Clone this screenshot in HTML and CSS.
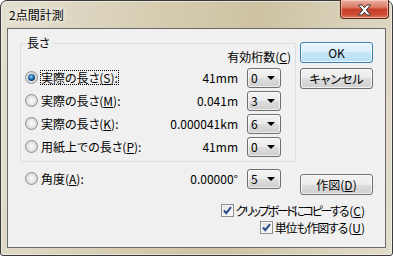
FILE: index.html
```html
<!DOCTYPE html>
<html lang="ja">
<head>
<meta charset="utf-8">
<title>2点間計測</title>
<link rel="stylesheet" href="styles.css">
</head>
<body>
<div class="window">
  <div class="titlebar">
    <span class="title">2点間計測</span>
    <div class="close">
      <svg width="15" height="12" viewBox="0 0 15 12"><polygon points="1.5,1 5,1 7.5,3.8 10,1 13.5,1 9.3,6 13.5,11 10,11 7.5,8.2 5,11 1.5,11 5.7,6" fill="#fff" stroke="#3a3a3a" stroke-width="1" stroke-linejoin="round"/></svg>
    </div>
  </div>
  <div class="client">
    <div class="layout">
      <fieldset class="group">
        <legend>長さ</legend>
        <div class="hdr">有効桁数(<u>C</u>)</div>
        <div class="row">
          <span class="opt"><span class="radio on"><span class="dot"></span></span><span class="lbl focus">実際の長さ(<u>S</u>):</span></span>
          <span class="val">41mm</span>
          <span class="combo"><span>0</span><i class="arrow"></i></span>
        </div>
        <div class="row">
          <span class="opt"><span class="radio"></span><span class="lbl">実際の長さ(<u>M</u>):</span></span>
          <span class="val">0.041m</span>
          <span class="combo"><span>3</span><i class="arrow"></i></span>
        </div>
        <div class="row">
          <span class="opt"><span class="radio"></span><span class="lbl">実際の長さ(<u>K</u>):</span></span>
          <span class="val">0.000041km</span>
          <span class="combo"><span>6</span><i class="arrow"></i></span>
        </div>
        <div class="row">
          <span class="opt"><span class="radio"></span><span class="lbl">用紙上での長さ(<u>P</u>):</span></span>
          <span class="val">41mm</span>
          <span class="combo"><span>0</span><i class="arrow"></i></span>
        </div>
      </fieldset>
      <div class="btns">
        <div class="btn default">OK</div>
        <div class="btn">キャンセル</div>
      </div>
      <div class="row angle">
        <span class="opt"><span class="radio"></span><span class="lbl">角度(<u>A</u>):</span></span>
        <span class="val">0.00000°</span>
        <span class="combo"><span>5</span><i class="arrow"></i></span>
      </div>
      <div class="btns draw">
        <div class="btn">作図(<u>D</u>)</div>
      </div>
      <div class="checks">
        <div class="chk"><span class="cb"><svg width="11" height="11" viewBox="0 0 11 11"><path d="M2 5.5 L4.3 8.2 L9 2.2" fill="none" stroke="#2b4c86" stroke-width="2"/></svg></span><span><span class="kana">クリップボードにコピーする</span>(<u>C</u>)</span></div>
        <div class="chk"><span class="cb"><svg width="11" height="11" viewBox="0 0 11 11"><path d="M2 5.5 L4.3 8.2 L9 2.2" fill="none" stroke="#2b4c86" stroke-width="2"/></svg></span><span><span class="kana2">単位も作図する</span>(<u>U</u>)</span></div>
      </div>
    </div>
  </div>
</div>
</body>
</html>
```

FILE: styles.css
```css
* { box-sizing: border-box; }
html, body { margin: 0; padding: 0; }
body {
  width: 393px;
  height: 256px;
  overflow: hidden;
  background: #fff;
  font-family: "Noto Sans CJK JP", "Noto Sans", sans-serif;
  font-feature-settings: "palt";
  font-size: 12px;
  color: #000;
}
.window {
  width: 393px;
  height: 256px;
  border: 1px solid #3b3b3b;
  border-radius: 7px 7px 3px 3px;
  background: linear-gradient(100deg, #e4dfd0 0%, #d6cdb2 35%, #cdc3a3 60%, #d8d0b8 80%, #e3ddcc 100%);
  box-shadow: inset 0 0 0 1px rgba(255,255,255,0.45);
  display: flex;
  flex-direction: column;
}
.titlebar {
  height: 27px;
  display: flex;
  justify-content: space-between;
  align-items: flex-start;
  padding: 0 3px 0 8px;
}
.title {
  margin-top: 7px;
  line-height: 14px;
  text-shadow: 0 0 6px #fff, 0 0 10px rgba(255,255,255,0.8);
}
.close {
  margin-top: -1px;
  width: 49px;
  height: 19px;
  border: 1px solid #5b2218;
  border-top: none;
  border-radius: 0 0 4px 4px;
  background: linear-gradient(#eab0a2 0%, #dc7a66 40%, #c8422b 52%, #cc4a31 80%, #dc7d5d 100%);
  box-shadow: inset 0 0 0 1px rgba(255,220,210,0.55);
  display: flex;
  align-items: center;
  justify-content: center;
}
.close svg { display: block; margin-top: 1px; }
.client {
  margin: 0 6px;
  height: 220px;
  border: 1px solid #6a6a6a;
  background: #f0f0f0;
  padding: 8px 12px 0 12px;
}
.layout {
  display: grid;
  grid-template-columns: 276px 73px;
  column-gap: 4px;
  align-items: start;
}
.group {
  margin: 0;
  min-width: 0;
  border: 1px solid #d5dfe5;
  border-radius: 3px;
  padding: 1px 4px 3px 4px;
}
.group legend {
  padding: 0 2px 0 2px;
  margin-left: 0;
  line-height: 12px;
  height: 12px;
}
.hdr {
  text-align: right;
  line-height: 14px;
  height: 14px;
  margin-bottom: 2px;
}
.row {
  display: grid;
  grid-template-columns: 1fr auto 34px;
  column-gap: 9px;
  align-items: center;
  height: 23px;
  padding-right: 10px;
}
.row.angle {
  margin-top: 6px;
  height: 21px;
  padding: 0 15px 0 5px;
}
.opt {
  display: flex;
  align-items: center;
  gap: 2px;
}
.radio {
  width: 13px;
  height: 13px;
  border-radius: 50%;
  border: 1px solid #8f8f8f;
  background: radial-gradient(circle at 50% 50%, #fdfdfd 0, #ececec 3px, #d6d6d6 5.5px);
  display: flex;
  align-items: center;
  justify-content: center;
  flex: none;
}
.radio .dot {
  width: 7px;
  height: 7px;
  border-radius: 50%;
  background: radial-gradient(circle at 45% 40%, #a6dcf6 0, #3b8fcc 1.6px, #1a5b93 3px, #0f3f6f 3.5px);
}
.lbl {
  border: 1px solid transparent;
  line-height: 13px;
  white-space: nowrap;
}
.lbl.focus { border: 1px dotted #000; }
.val {
  text-align: right;
  white-space: nowrap;
}
.combo {
  height: 20px;
  border: 1px solid #707070;
  border-radius: 3px;
  background: linear-gradient(#f3f3f3 0%, #ebebeb 50%, #dddddd 50%, #cfcfcf 100%);
  box-shadow: inset 0 0 0 1px rgba(255,255,255,0.6);
  display: flex;
  align-items: center;
  justify-content: space-between;
  padding: 0 5px 0 3px;
  line-height: 14px;
}
.arrow {
  width: 0;
  height: 0;
  border-top: 4px solid #000;
  border-left: 4px solid transparent;
  border-right: 4px solid transparent;
}
.btns {
  display: flex;
  flex-direction: column;
  gap: 5px;
  margin-top: 5px;
}
.btns.draw { margin-top: 12px; }
.btn {
  height: 21px;
  width: 73px;
  border: 1px solid #707070;
  border-radius: 3px;
  background: linear-gradient(#f3f3f3 0%, #ebebeb 50%, #dddddd 50%, #cfcfcf 100%);
  box-shadow: inset 0 0 0 1px rgba(255,255,255,0.7);
  display: flex;
  align-items: center;
  justify-content: center;
  line-height: 14px;
}
.btn.default {
  border-color: #3c7fb1;
  background: linear-gradient(#e9f5fc 0%, #dbeffb 50%, #c6e5f8 50%, #bbdff5 100%);
}
.checks {
  grid-column: 1 / -1;
  margin-top: 7px;
  padding-right: 8px;
  display: flex;
  flex-direction: column;
  align-items: flex-end;
}
.chk {
  height: 17px;
  display: flex;
  align-items: center;
  gap: 2px;
  line-height: 14px;
  white-space: nowrap;
}
.kana { letter-spacing: -2.3px; margin-right: 2px; }
.kana2 { letter-spacing: -1.2px; margin-right: 1px; }
.cb {
  width: 13px;
  height: 13px;
  border: 1px solid #8e8f8f;
  background: linear-gradient(135deg, #e0e0e0, #fbfbfb);
  box-shadow: inset 0 0 0 1px #f6f6f6;
  display: flex;
  align-items: center;
  justify-content: center;
  flex: none;
}
.cb svg { display: block; }
u { text-decoration-thickness: 1px; text-underline-offset: 1px; }
```
